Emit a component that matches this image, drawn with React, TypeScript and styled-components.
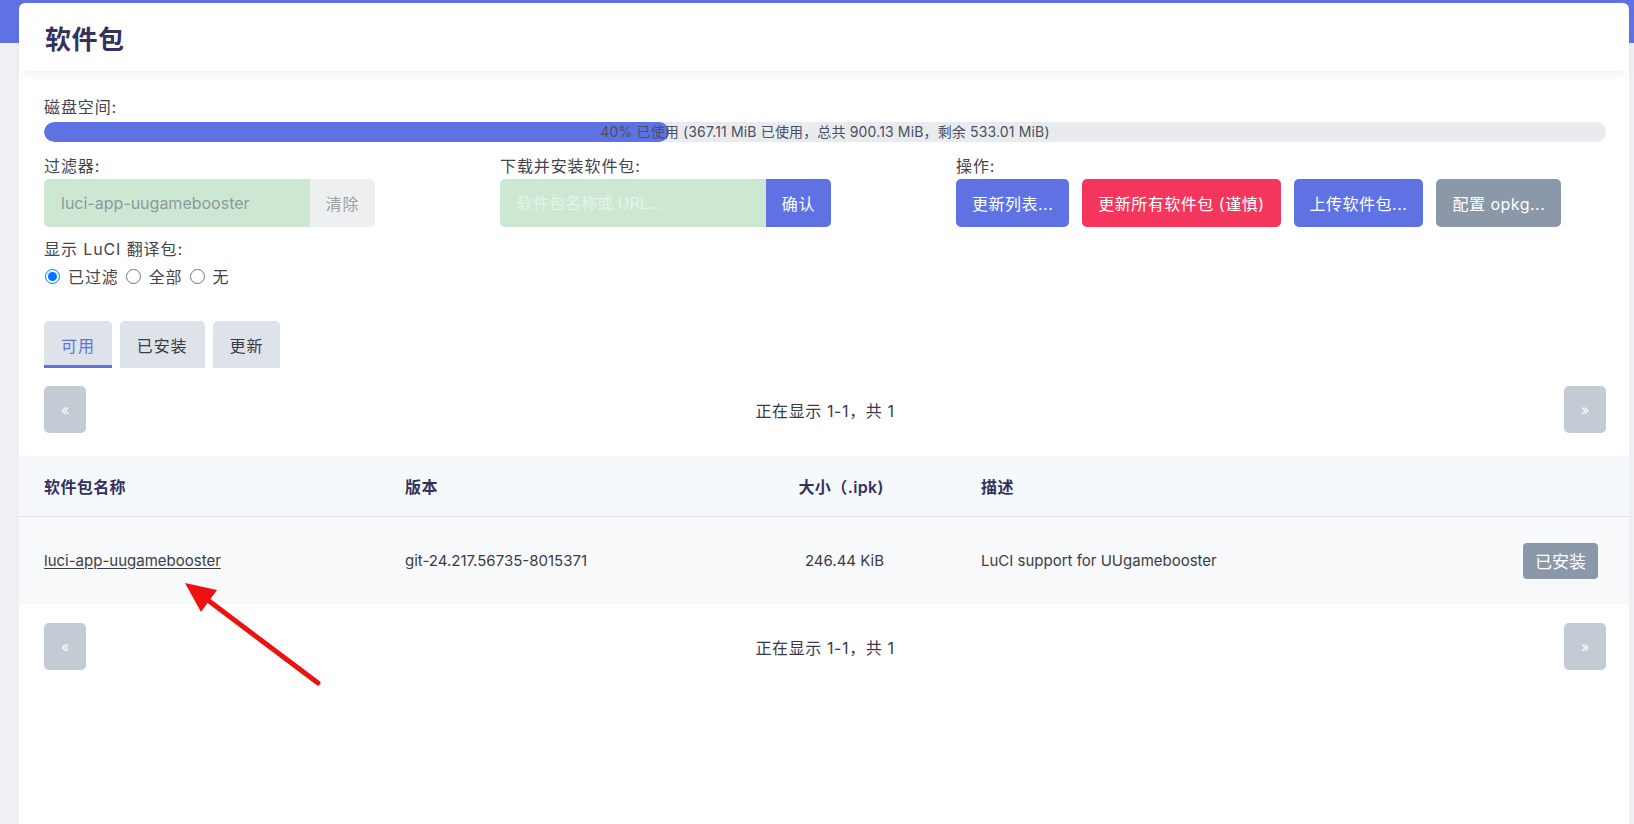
import React from "react";
import styled, { createGlobalStyle } from "styled-components";

const GlobalStyle = createGlobalStyle`
  html, body { margin: 0; padding: 0; }
  body {
    background: linear-gradient(#5e72e4 0 43px, #eef0f3 43px) no-repeat, #eef0f3;
    font-family: Inter, "Noto Sans CJK SC", sans-serif;
    color: #32325d;
  }
  * { box-sizing: border-box; }
`;

const Card = styled.main`
  position: relative;
  margin: 3px 5px 0 19px;
  min-height: 821px;
  background: #ffffff;
  border-radius: 6px 6px 0 0;
`;

const Title = styled.h2`
  margin: 0;
  height: 68px;
  padding-left: 26px;
  display: flex;
  align-items: center;
  font-size: 26px;
  font-weight: 700;
  letter-spacing: 0.5px;
  color: #32325d;
  box-shadow: 0 6px 10px -4px rgba(136, 152, 170, 0.18);
`;

const Body = styled.section`
  padding: 25px 23px 0 25px;
`;

const Label = styled.div`
  font-size: 16px;
  line-height: 22px;
  letter-spacing: 0.9px;
  color: #44444e;
`;

const DiskBar = styled.div`
  display: grid;
  margin-top: 4px;
  height: 20px;
  border-radius: 10px;
  background: #e9ecef;
  overflow: hidden;
  & > * { grid-area: 1 / 1; }
`;

const DiskFill = styled.div`
  height: 100%;
  border-radius: 10px;
  background: #5e72e4;
`;

const DiskText = styled.div`
  font-size: 14px;
  line-height: 20px;
  letter-spacing: 0.15px;
  text-align: center;
  color: #4a4f63;
`;

const Controls = styled.div`
  display: grid;
  grid-template-columns: 456px 456px 1fr;
  margin-top: 13px;
`;

const InputGroup = styled.div<{ $width: number }>`
  display: flex;
  width: ${(p) => p.$width}px;
  height: 48px;
  margin-top: 2px;
`;

const TextBox = styled.input`
  flex: 1;
  min-width: 0;
  border: none;
  outline: none;
  border-radius: 5px 0 0 5px;
  background: #cde8d2;
  padding: 0 17px;
  font: 16px Inter, "Noto Sans CJK SC", sans-serif;
  color: #8b999e;
  &::placeholder { color: #e6f3e8; }
`;

const AddonButton = styled.button<{ $tone: string; $ink: string }>`
  width: 65px;
  border: none;
  border-radius: 0 5px 5px 0;
  background: ${(p) => p.$tone};
  color: ${(p) => p.$ink};
  font: 16px Inter, "Noto Sans CJK SC", sans-serif;
  letter-spacing: 0.8px;
`;

const ActionRow = styled.div`
  display: flex;
  gap: 13px;
  margin-top: 2px;
`;

const ActionButton = styled.button<{ $tone: string }>`
  height: 48px;
  padding: 0 16px;
  border: none;
  border-radius: 5px;
  background: ${(p) => p.$tone};
  color: #ffffff;
  font: 16px Inter, "Noto Sans CJK SC", sans-serif;
  letter-spacing: 0.5px;
`;

const Section = styled.div<{ $gap: number }>`
  margin-top: ${(p) => p.$gap}px;
`;

const Radios = styled.div`
  display: flex;
  align-items: center;
  height: 22px;
  margin-top: 5px;
  margin-left: -4px;
  font-size: 16px;
  letter-spacing: 0.9px;
  color: #44444e;
`;

const RadioOption = styled.label`
  display: inline-flex;
  align-items: center;
  margin-right: 2px;
  input {
    width: 15px;
    height: 15px;
    margin: 0 8px 0 5px;
  }
`;

const Tabs = styled.nav`
  display: flex;
  gap: 8px;
  margin-top: 34px;
`;

const Tab = styled.div<{ $active?: boolean }>`
  height: 47px;
  padding: 3px 17px 0;
  display: flex;
  align-items: center;
  background: #dee3e9;
  border-radius: 5px 5px 0 0;
  border-bottom: 3px solid ${(p) => (p.$active ? "#5e72e4" : "transparent")};
  font-size: 16px;
  letter-spacing: 0.9px;
  color: ${(p) => (p.$active ? "#5e72e4" : "#3a3a46")};
`;

const Pager = styled.div<{ $gap: number; $inset?: boolean }>`
  display: flex;
  justify-content: space-between;
  align-items: center;
  margin-top: ${(p) => p.$gap}px;
  padding: ${(p) => (p.$inset ? "0 23px 0 25px" : "0")};
`;

const PageButton = styled.button`
  width: 42px;
  height: 47px;
  border: none;
  border-radius: 5px;
  background: #c3cbd4;
  color: #ffffff;
  font: 14px Inter, sans-serif;
`;

const PagerText = styled.span`
  font-size: 16px;
  letter-spacing: 0.6px;
  color: #3a3a46;
`;

const Table = styled.div`
  margin-top: 23px;
`;

const Row = styled.div<{ $head?: boolean }>`
  display: grid;
  grid-template-columns: 361px 359px 217px 1fr auto;
  align-items: center;
  padding: 0 31px 0 25px;
  height: ${(p) => (p.$head ? 61 : 87)}px;
  background: ${(p) => (p.$head ? "#f6f9fc" : "#f8f9fa")};
  border-bottom: ${(p) => (p.$head ? "1px solid #e1e5ea" : "none")};
  font-size: ${(p) => (p.$head ? 16 : 15)}px;
  font-weight: ${(p) => (p.$head ? 600 : 400)};
  letter-spacing: ${(p) => (p.$head ? 0.4 : 0)}px;
  color: ${(p) => (p.$head ? "#32325d" : "#3c3c46")};
`;

const Cell = styled.div<{ $numeric?: boolean }>`
  text-align: ${(p) => (p.$numeric ? "right" : "left")};
  padding-right: ${(p) => (p.$numeric ? 97 : 0)}px;
`;

const PackageLink = styled.a`
  color: #3c3c46;
  text-decoration: underline;
  text-underline-offset: 2px;
`;

const InstalledButton = styled.button`
  height: 36px;
  padding: 0 12px;
  border: none;
  border-radius: 4px;
  background: #8a98aa;
  color: #ffffff;
  font: 17px Inter, "Noto Sans CJK SC", sans-serif;
`;

const Pointer = styled.svg`
  position: absolute;
  left: 150px;
  top: 565px;
  width: 165px;
  height: 130px;
  pointer-events: none;
`;

const disk = { used: 40 };

export default function App() {
  return (
    <>
      <GlobalStyle />
      <Card>
        <Title>软件包</Title>
        <Body>
          <Label>磁盘空间:</Label>
          <DiskBar>
            <DiskFill style={{ width: `${disk.used}%` }} />
            <DiskText>40% 已使用 (367.11 MiB 已使用，总共 900.13 MiB，剩余 533.01 MiB)</DiskText>
          </DiskBar>

          <Controls>
            <div>
              <Label>过滤器:</Label>
              <InputGroup $width={331}>
                <TextBox defaultValue="luci-app-uugamebooster" />
                <AddonButton $tone="#eeeff0" $ink="#9aa1a8">清除</AddonButton>
              </InputGroup>
            </div>
            <div>
              <Label>下载并安装软件包:</Label>
              <InputGroup $width={331}>
                <TextBox placeholder="软件包名称或 URL..." />
                <AddonButton $tone="#5e72e4" $ink="#ffffff">确认</AddonButton>
              </InputGroup>
            </div>
            <div>
              <Label>操作:</Label>
              <ActionRow>
                <ActionButton $tone="#5e72e4">更新列表...</ActionButton>
                <ActionButton $tone="#f5365c">更新所有软件包 (谨慎)</ActionButton>
                <ActionButton $tone="#5e72e4">上传软件包...</ActionButton>
                <ActionButton $tone="#8a98aa">配置 opkg...</ActionButton>
              </ActionRow>
            </div>
          </Controls>

          <Section $gap={11}>
            <Label>显示 LuCI 翻译包:</Label>
            <Radios>
              <RadioOption>
                <input type="radio" name="i18n" defaultChecked />
                已过滤
              </RadioOption>
              <RadioOption>
                <input type="radio" name="i18n" />
                全部
              </RadioOption>
              <RadioOption>
                <input type="radio" name="i18n" />
                无
              </RadioOption>
            </Radios>
          </Section>

          <Tabs>
            <Tab $active>可用</Tab>
            <Tab>已安装</Tab>
            <Tab>更新</Tab>
          </Tabs>

          <Pager $gap={18}>
            <PageButton>«</PageButton>
            <PagerText>正在显示 1-1，共 1</PagerText>
            <PageButton>»</PageButton>
          </Pager>
        </Body>

        <Table>
          <Row $head>
            <Cell>软件包名称</Cell>
            <Cell>版本</Cell>
            <Cell $numeric>大小（.ipk)</Cell>
            <Cell>描述</Cell>
            <Cell />
          </Row>
          <Row>
            <Cell>
              <PackageLink href="#">luci-app-uugamebooster</PackageLink>
            </Cell>
            <Cell>git-24.217.56735-8015371</Cell>
            <Cell $numeric>246.44 KiB</Cell>
            <Cell>LuCI support for UUgamebooster</Cell>
            <Cell>
              <InstalledButton>已安装</InstalledButton>
            </Cell>
          </Row>
        </Table>

        <Pager $gap={19} $inset>
          <PageButton>«</PageButton>
          <PagerText>正在显示 1-1，共 1</PagerText>
          <PageButton>»</PageButton>
        </Pager>

        <Pointer viewBox="0 0 165 130">
          <line x1="149" y1="115" x2="40" y2="33" stroke="#ee1111" strokeWidth="5" strokeLinecap="round" />
          <polygon points="16,15 48,22 32,44" fill="#ee1111" />
        </Pointer>
      </Card>
    </>
  );
}
